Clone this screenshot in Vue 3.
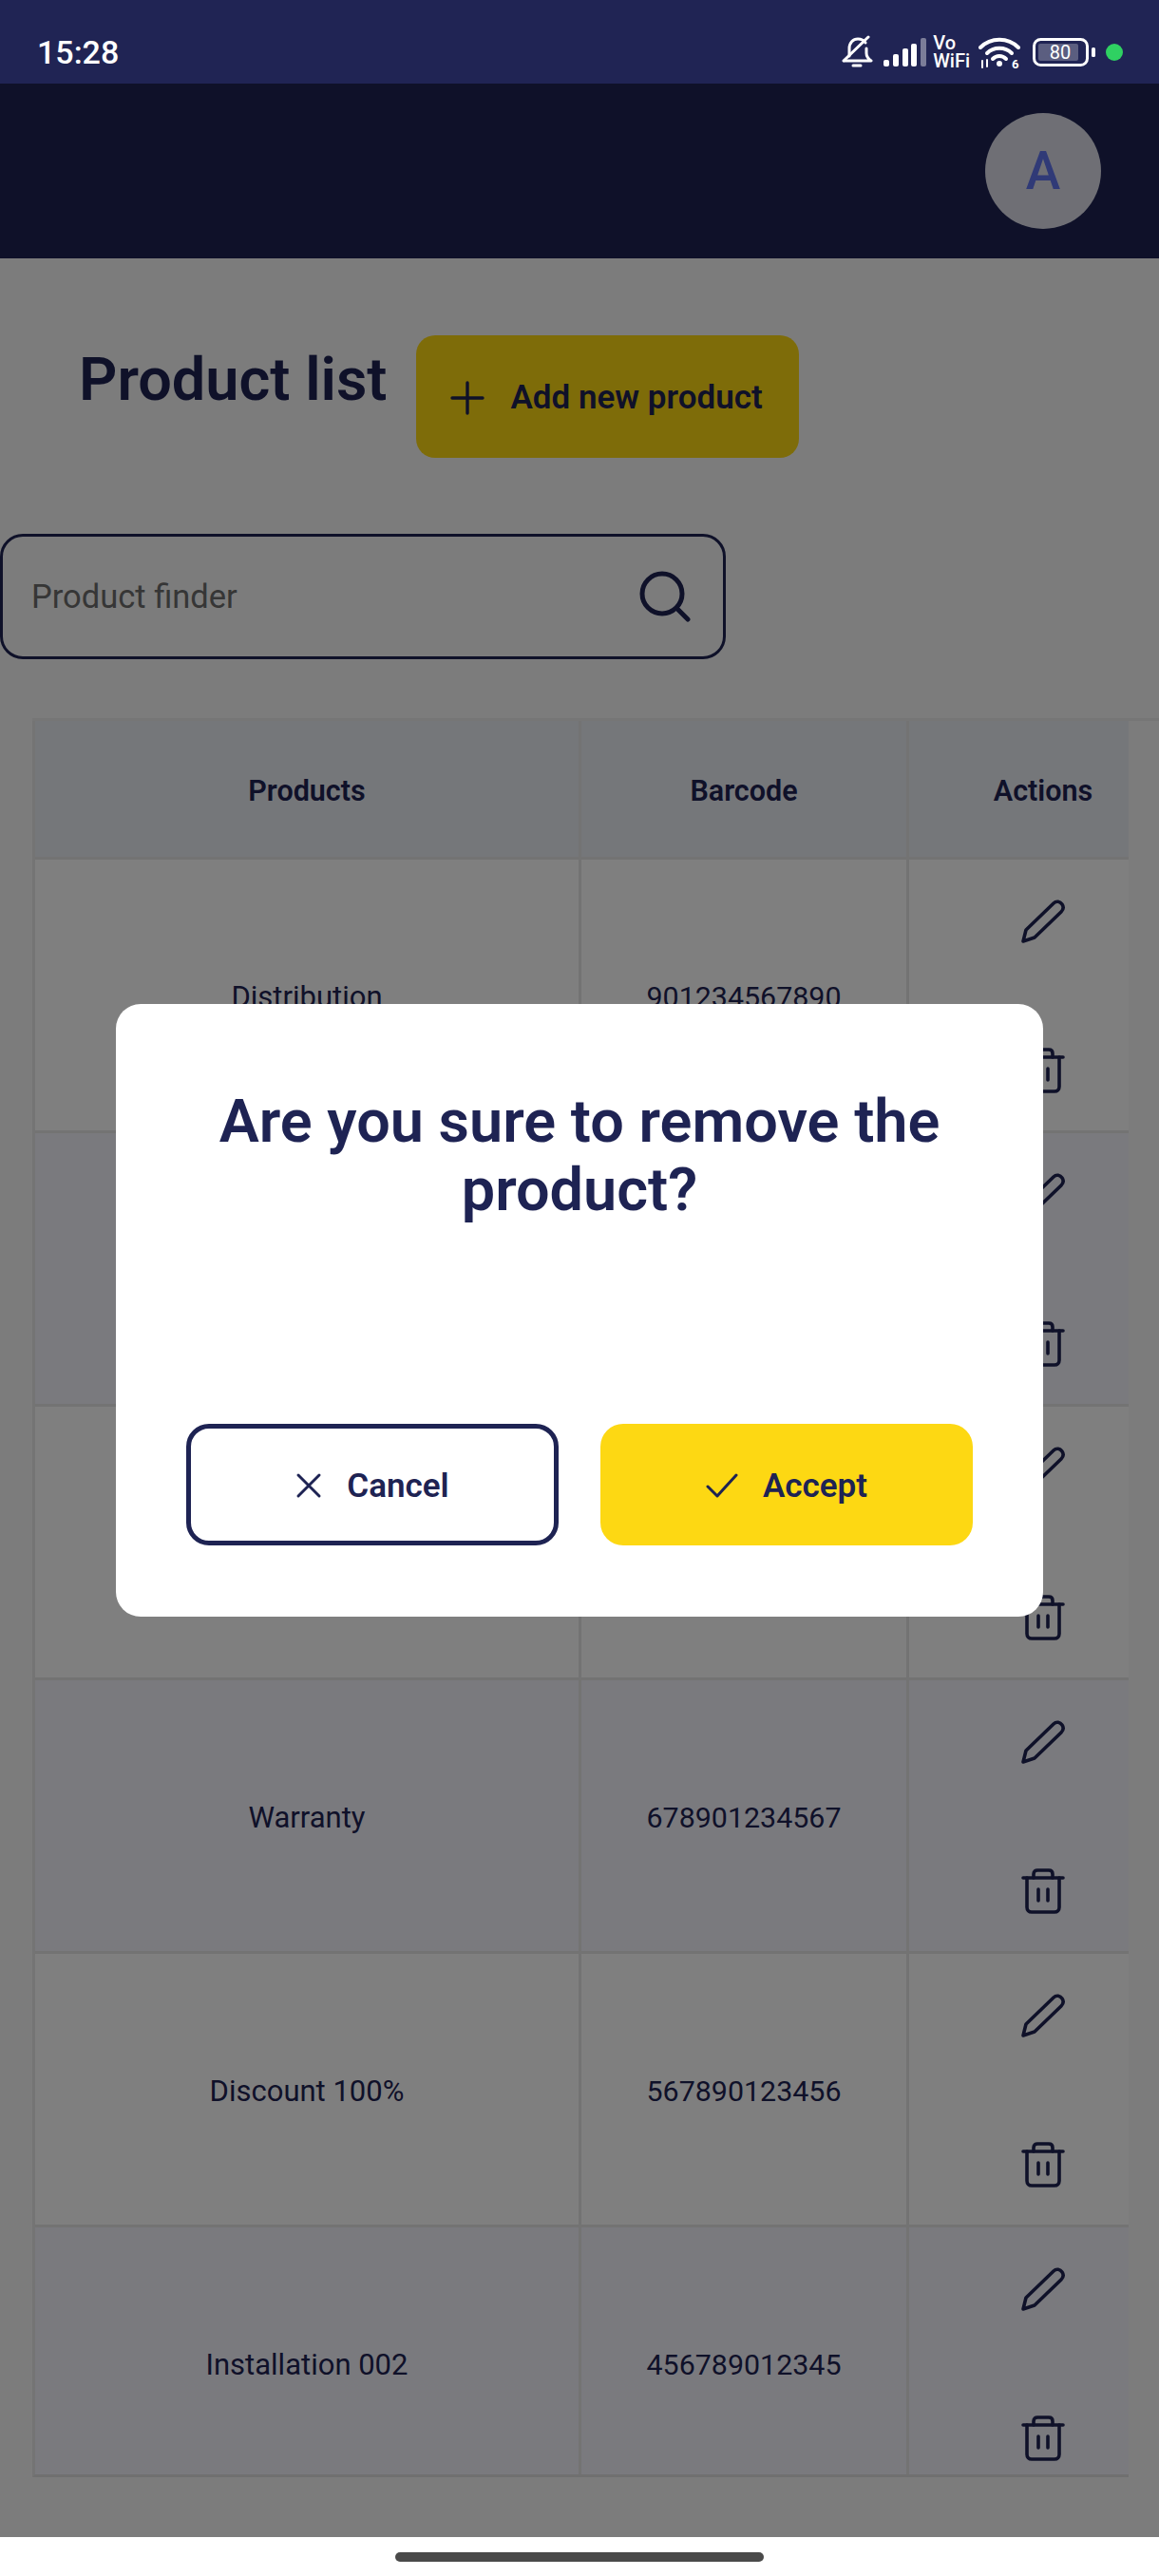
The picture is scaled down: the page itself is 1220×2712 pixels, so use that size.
<template>
  <div class="screen">
    <div class="status-bar">
      <span class="time">15:28</span>
      <div class="status-icons">
        <svg class="ic-bell" width="34" height="36" viewBox="0 0 34 36" fill="none" stroke="#fff" stroke-width="3" stroke-linecap="round" stroke-linejoin="round">
          <path d="M9 22V14C9 8 13 4 18 4C21 4 24 5 26 8M27 14V19C27 23 29 25 32 27H4" />
          <path d="M13 32H21" />
          <path d="M3 27L29 2" />
        </svg>
        <svg class="ic-signal" width="45" height="30" viewBox="0 0 45 30">
          <rect x="0" y="23" width="6" height="7" rx="2" fill="#fff" />
          <rect x="10" y="17" width="6" height="13" rx="2" fill="#fff" />
          <rect x="20" y="11" width="6" height="19" rx="2" fill="#fff" />
          <rect x="29" y="6" width="6" height="24" rx="2" fill="#fff" />
          <rect x="39" y="0" width="6" height="30" rx="2" fill="#7b7d99" />
        </svg>
        <div class="vowifi"><span>Vo</span><span>WiFi</span></div>
        <svg class="ic-wifi" width="44" height="38" viewBox="0 0 44 38" fill="none" stroke="#fff" stroke-width="4" stroke-linecap="round">
          <path d="M2 11C13 0 31 0 42 11" />
          <path d="M9 17C16 10 28 10 35 17" />
          <path d="M15 23C19 19 25 19 29 23" />
          <circle cx="22" cy="28" r="3" fill="#fff" stroke="none" />
          <path d="M4 25V32M9 24V31" stroke-width="2" />
          <text x="35" y="33" font-size="13" font-weight="700" fill="#fff" stroke="none" font-family="Roboto, sans-serif">6</text>
        </svg>
        <svg class="ic-battery" width="66" height="30" viewBox="0 0 66 30">
          <rect x="1.5" y="1.5" width="56" height="27" rx="7" fill="none" stroke="#fff" stroke-width="3" />
          <rect x="6" y="6" width="42" height="18" rx="2" fill="#5b5e80" />
          <rect x="62" y="10" width="4" height="10" rx="1.5" fill="#fff" />
          <text x="29" y="22" font-size="20" text-anchor="middle" fill="#fff" font-family="Roboto, sans-serif">80</text>
        </svg>
        <span class="dot"></span>
      </div>
    </div>

    <div class="page">
      <header class="topbar">
        <div class="avatar">A</div>
      </header>

      <div class="title-row">
        <h1>Product list</h1>
        <button class="add-btn">
          <svg width="36" height="36" viewBox="0 0 36 36" fill="none" stroke="#1e2353" stroke-width="3.4" stroke-linecap="round">
            <path d="M18 2V34M2 18H34" />
          </svg>
          Add new product
        </button>
      </div>

      <div class="search">
        <span class="placeholder">Product finder</span>
        <svg width="54" height="54" viewBox="0 0 54 54" fill="none" stroke="#1e2353" stroke-width="5" stroke-linecap="round">
          <circle cx="24" cy="24" r="21" />
          <path d="M40 40L51 51" />
        </svg>
      </div>

      <section class="table-area">
        <div class="table-clip">
          <div class="table">
            <div class="cell head"><span class="val">Products</span></div>
            <div class="cell head"><span class="val">Barcode</span></div>
            <div class="cell head"><span class="val">Actions</span></div>
            <template v-for="(p, i) in products" :key="p.code">
              <div class="cell" :class="{ alt: i % 2 === 1 }"><span class="val">{{ p.name }}</span></div>
              <div class="cell code" :class="{ alt: i % 2 === 1 }"><span class="val">{{ p.code }}</span></div>
              <div class="cell actions" :class="{ alt: i % 2 === 1 }">
                <svg width="48" height="48" viewBox="0 0 48 48" fill="none" stroke="#1e2353" stroke-width="3.6" stroke-linejoin="round">
                  <path d="M3 45L6 33L35 5C38 2 42 3 44 6C46 9 45 12 43 14L15 41Z" />
                </svg>
                <svg width="46" height="48" viewBox="0 0 46 48" fill="none" stroke="#1e2353" stroke-width="3.6" stroke-linecap="round" stroke-linejoin="round">
                  <path d="M2 10H44" />
                  <path d="M6 10V41C6 44 8 46 11 46H35C38 46 40 44 40 41V10" />
                  <path d="M13 10V6C13 3 15 2 17 2H29C31 2 33 3 33 6V10" />
                  <path d="M18 22V34M28 22V34" />
                </svg>
              </div>
            </template>
          </div>
        </div>
      </section>

      <div class="overlay">
        <div class="dialog">
          <h2>Are you sure to remove the product?</h2>
          <div class="dialog-btns">
            <button class="btn cancel">
              <svg width="28" height="28" viewBox="0 0 28 28" fill="none" stroke="#1e2353" stroke-width="3" stroke-linecap="round">
                <path d="M3 3L25 25M25 3L3 25" />
              </svg>
              Cancel
            </button>
            <button class="btn accept">
              <svg width="34" height="28" viewBox="0 0 34 28" fill="none" stroke="#1e2353" stroke-width="3" stroke-linecap="round" stroke-linejoin="round">
                <path d="M2 15L12 25L32 3" />
              </svg>
              Accept
            </button>
          </div>
        </div>
      </div>
    </div>

    <div class="nav-bar"><span class="handle"></span></div>
  </div>
</template>

<script setup>
const products = [
  { name: "Distribution", code: "901234567890" },
  { name: "Maintenance", code: "890123456789" },
  { name: "Support", code: "789012345678" },
  { name: "Warranty", code: "678901234567" },
  { name: "Discount 100%", code: "567890123456" },
  { name: "Installation 002", code: "456789012345" },
];
</script>

<style>
html,
body {
  margin: 0;
  background: #fff;
}
</style>

<style scoped>
.screen {
  width: 1220px;
  height: 2712px;
  display: flex;
  flex-direction: column;
  overflow: hidden;
  font-family: Roboto, "Liberation Sans", sans-serif;
  color: #1e2353;
}

.status-bar {
  height: 88px;
  flex: none;
  box-sizing: border-box;
  padding: 22px 38px 0 39px;
  display: flex;
  align-items: center;
  justify-content: space-between;
  background: #202454;
  color: #fff;
}

.time {
  font-size: 34px;
  font-weight: 500;
}

.status-icons {
  display: flex;
  align-items: center;
}

.ic-signal {
  margin-left: 11px;
}

.vowifi {
  margin-left: 7px;
  display: flex;
  flex-direction: column;
  font-size: 20px;
  line-height: 19px;
  font-weight: 500;
}

.ic-wifi {
  margin: 5px 0 0 9px;
}

.ic-battery {
  margin-left: 13px;
}

.dot {
  width: 18px;
  height: 18px;
  margin-left: 11px;
  border-radius: 50%;
  background: #2fd162;
}

.page {
  position: relative;
  flex: 1;
  background: #f9f9f9;
  min-height: 0;
}

.topbar {
  height: 184px;
  box-sizing: border-box;
  padding-right: 61px;
  display: flex;
  align-items: center;
  justify-content: flex-end;
  background: #1e2353;
}

.avatar {
  width: 122px;
  height: 122px;
  border-radius: 50%;
  background: #dedfeb;
  color: #6074ee;
  font-size: 55px;
  font-weight: 500;
  display: flex;
  align-items: center;
  justify-content: center;
}

.title-row {
  display: flex;
  align-items: flex-start;
  gap: 31px;
  margin-top: 81px;
  padding-left: 83px;
}

h1 {
  margin: 0;
  font-size: 63px;
  line-height: 94px;
  font-weight: 600;
}

.add-btn {
  width: 403px;
  height: 129px;
  border: none;
  border-radius: 20px;
  background: #fdd813;
  color: #1e2353;
  font: 600 35px Roboto, sans-serif;
  display: flex;
  align-items: center;
  gap: 27px;
  padding: 2px 0 0 36px;
  box-sizing: border-box;
}

.search {
  width: 764px;
  height: 132px;
  margin-top: 80px;
  box-sizing: border-box;
  border: 3px solid #1e2353;
  border-radius: 24px;
  padding: 0 34px 0 30px;
  display: flex;
  align-items: center;
  justify-content: space-between;
}

.placeholder {
  font-size: 34.5px;
  color: #6c6c6c;
}

.table-area {
  margin: 62px 0 0 34px;
  height: 1852px;
  box-sizing: border-box;
  border-top: 3px solid #ececec;
}

.table-clip {
  width: 1154px;
  height: 1849px;
  box-sizing: border-box;
  overflow: hidden;
  border-left: 3px solid #e8e8e8;
  border-bottom: 3px solid #e0e0e0;
}

.table {
  width: 1202px;
  display: grid;
  grid-template-columns: 575px 345px 282px;
  grid-auto-rows: 288px;
  grid-template-rows: 146px;
}

.cell {
  display: flex;
  align-items: center;
  justify-content: center;
  font-size: 31px;
  background: #fff;
  border-right: 3px solid #e6e6e6;
  border-bottom: 3px solid #e6e6e6;
  box-sizing: border-box;
}

.cell:nth-child(3n) {
  border-right: none;
}

.val {
  margin-top: 3px;
}

.code {
  font-size: 30.4px;
}

.head {
  background: #ebeef5;
  font-size: 30.5px;
  font-weight: 600;
}

.alt {
  background: #f5f5fd;
}

.actions {
  flex-direction: column;
  justify-content: flex-start;
  gap: 109px;
  padding-top: 41px;
}

.overlay {
  position: absolute;
  inset: 0;
  background: rgba(0, 0, 0, 0.5);
  display: flex;
  align-items: center;
  justify-content: center;
}

.dialog {
  width: 976px;
  height: 645px;
  box-sizing: border-box;
  padding: 88px 74px 75px;
  border-radius: 26px;
  background: #fff;
  display: flex;
  flex-direction: column;
  justify-content: space-between;
}

h2 {
  margin: 0;
  font-size: 63px;
  line-height: 72px;
  font-weight: 600;
  text-align: center;
}

.dialog-btns {
  display: flex;
  gap: 44px;
}

.btn {
  flex: 0 0 392px;
  height: 128px;
  box-sizing: border-box;
  border-radius: 24px;
  color: #1e2353;
  font: 600 35px Roboto, sans-serif;
  display: flex;
  align-items: center;
  justify-content: center;
  gap: 26px;
  padding: 2px 0 0;
}

.cancel {
  background: #fff;
  border: 5px solid #1e2353;
}

.accept {
  background: #fdd813;
  border: none;
}

.nav-bar {
  height: 41px;
  flex: none;
  background: #fff;
  display: flex;
  justify-content: center;
  padding-top: 16px;
  box-sizing: border-box;
}

.handle {
  width: 388px;
  height: 10px;
  border-radius: 5px;
  background: #4a4a4a;
}
</style>
